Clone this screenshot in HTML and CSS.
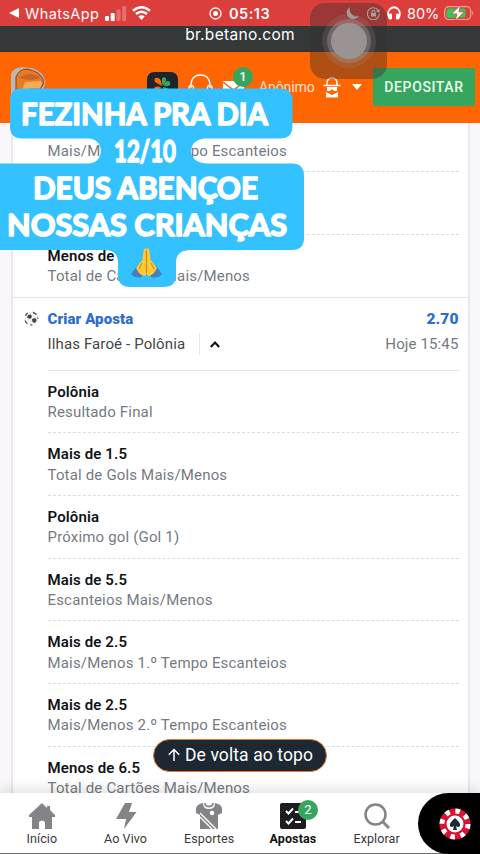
FILE: index.html
```html
<!DOCTYPE html>
<html lang="pt-BR">
<head>
<meta charset="utf-8">
<title>Apostas</title>
<link rel="stylesheet" href="styles.css">
</head>
<body>
<div class="phone">
  <div class="status">
    <div class="status-left">
      <svg width="10" height="10" viewBox="0 0 10 10"><path d="M0 5L10 0V10Z" fill="#fff"/></svg>
      <span class="carrier">WhatsApp</span>
      <svg class="signal" width="22" height="15" viewBox="0 0 22 15"><g fill="#fff"><rect y="10" width="4" height="5" rx="1"/><rect x="5.7" y="7" width="4" height="8" rx="1"/></g><g fill="#fff" opacity=".25"><rect x="11.5" y="3.5" width="4" height="11.5" rx="1"/><rect x="17.2" width="4" height="15" rx="1"/></g></svg>
      <svg width="19" height="14" viewBox="0 0 19 14" fill="none" stroke="#fff" stroke-width="2.6"><path d="M1 4.7Q9.500-2.200 18 4.700M4 8Q9.500 3.500 15 8"/><path d="M9.500 14L6.300 10.600Q9.500 8 12.700 10.600Z" fill="#fff" stroke="none"/></svg>
    </div>
    <div class="status-time">
      <svg width="13" height="13" viewBox="0 0 13 13"><circle cx="6.500" cy="6.500" r="5.500" fill="none" stroke="#fff" stroke-width="1.300"/><circle cx="6.500" cy="6.500" r="2.500" fill="#fff"/></svg>
      <span>05:13</span>
    </div>
    <div class="status-right">
      <svg width="13" height="13" viewBox="0 0 13 13"><path d="M4 0A7 7 0 0 0 12.800 9A6.500 6.500 0 1 1 4 0Z" fill="#ece4e4"/></svg>
      <svg class="lock" width="13" height="13" viewBox="0 0 13 13" fill="none" stroke="#eee" stroke-width="1.100"><path d="M11.500 3.600A6 6 0 1 0 12.400 7M12.500 2.500L11.700 5L9.500 4"/><path d="M5 6V4.700a1.500 1.500 0 0 1 3 0V6"/><rect x="4" y="6" width="5" height="3.500" fill="#eee" stroke="none"/></svg>
      <svg class="phones" width="14" height="14" viewBox="0 0 14 14"><path d="M2.500 12.500Q-.5 6.500 3 3Q7-.5 11 3Q14.500 6.500 11.500 12.500" fill="none" stroke="#fff" stroke-width="1.700"/><rect x="2" y="7.500" width="3" height="6" rx="1.300" fill="#fff"/><rect x="9" y="7.500" width="3" height="6" rx="1.300" fill="#fff"/></svg>
      <span class="percent">80%</span>
      <svg width="30" height="16" viewBox="0 0 30 16"><rect x=".7" y="1.700" width="26" height="12.800" rx="4" fill="none" stroke="#f2a19d" stroke-width="1.200"/><rect x="2.500" y="3.500" width="19" height="9.200" rx="2" fill="#35c759"/><path d="M28 6Q30.500 8 28 10Z" fill="#f2a19d"/><path d="M16.500 0L7.500 9H13L11 16L20.500 6.800H15Z" fill="#fff" stroke="#c94240" stroke-width=".8"/></svg>
    </div>
  </div>
  <div class="url">br.betano.com</div>
  <header class="top">
    <svg class="logo" width="38" height="48" viewBox="0 0 38 48"><path d="M1 45V9Q2 2 12 1L22 2Q32 5 35 14Q36 18 33 23L31 26V45Z" fill="#bcb7b3"/><path d="M6 45V11Q9 3 17 3Q29 5 33 13Q35 18 31 22L28 27V45Z" fill="#ee7a20" stroke="#6b4937"/><path d="M9 12Q20 4 31 12L22 14L13 13Z" fill="#c9642a"/><path d="M12 25L15 16L31 15Q33 18 30 22H20L17 26Z" fill="#f5ac52"/></svg>
    <svg class="clover" width="31" height="32" viewBox="0 0 31 32"><rect width="31" height="32" rx="7" fill="#1d242b"/><path d="M15 14L8 10Q6 5 11 6Q14 6 15 14ZM14 15Q6 13 7 18Q9 22 14 15Z" fill="#ff6500"/><path d="M16 14Q13 6 17 5Q22 7 16 14ZM17 14Q19 7 23 10Q25 15 17 14ZM16 15Q24 16 21 20Q17 21 16 15ZM14 15Q15 20 19 24L16 24Q13 21 14 15Z" fill="#36a55d"/></svg>
    <svg class="support" width="25" height="27" viewBox="0 0 25 27" fill="none" stroke="#fff" stroke-width="1.300"><path d="M3 14V10Q4 1 12.500 1Q21 1 22 10V14"/><rect x="1" y="11.500" width="4.500" height="9" rx="2"/><rect x="19.500" y="11.500" width="4.500" height="9" rx="2"/></svg>
    <div class="mail">
      <svg width="21" height="17" viewBox="0 0 21 17"><rect width="21" height="17" fill="#fff"/><path d="M0 1L10.500 9L21 1" fill="none" stroke="#ff6500" stroke-width="1.500"/></svg>
      <span class="badge mail-badge">1</span>
    </div>
    <span class="user">Anônimo</span>
    <svg class="spy" width="18" height="21" viewBox="0 0 18 21"><path d="M4 8V5Q5 1 9 1Q13 1 14 5V8M.500 8.500H17.500" fill="none" stroke="#fff" stroke-width="1.400"/><path d="M4 10H14V14H11L9 12L7 14H4ZM3 15L9 18L15 15V20.500H3Z" fill="#fff"/></svg>
    <svg class="caret" width="10" height="6" viewBox="0 0 10 6"><path d="M0 0H10L5 6Z" fill="#fff"/></svg>
    <div class="deposit">DEPOSITAR</div>
  </header>
  <main class="content">
    <section class="card">
      <div class="legs previous">
        <div class="leg"><b></b><span>Mais/Menos 1.º Tempo Escanteios</span></div>
        <div class="leg"></div>
        <div class="leg"><b>Menos de</b><span>Total de Cartões Mais/Menos</span></div>
      </div>
      <div class="bet">
        <svg class="ball" width="15" height="15" viewBox="0 0 15 15"><circle cx="7.500" cy="7.500" r="7" fill="#f0f0f0"/><g fill="#444"><path d="M4 4L7 3.500L8 6L6 8L3 6.500ZM8 8L11 7L12.800 9L11 12L8.500 11Z"/><path d="M1 4L3 1.500L4 2L2 5ZM9 .5L13 3L12 4L9 2ZM.5 9L2 10L4 13.500L1.500 12ZM7 13L9 14.500L6 14.500ZM13.500 5L14.500 8L13.500 8Z"/></g></svg>
        <div class="bet-line"><b>Criar Aposta</b><b class="odd">2.70</b></div>
        <div class="match"><span class="teams">Ilhas Faroé - Polônia</span><i class="divider"></i><svg width="10" height="7" viewBox="0 0 10 7"><path d="M.800 6L5 1.500L9.200 6" fill="none" stroke="#111" stroke-width="2"/></svg><span class="when">Hoje 15:45</span></div>
      </div>
      <div class="legs">
        <div class="leg"><b>Polônia</b><span>Resultado Final</span></div>
        <div class="leg"><b>Mais de 1.5</b><span>Total de Gols Mais/Menos</span></div>
        <div class="leg"><b>Polônia</b><span>Próximo gol (Gol 1)</span></div>
        <div class="leg"><b>Mais de 5.5</b><span>Escanteios Mais/Menos</span></div>
        <div class="leg"><b>Mais de 2.5</b><span>Mais/Menos 1.º Tempo Escanteios</span></div>
        <div class="leg"><b>Mais de 2.5</b><span>Mais/Menos 2.º Tempo Escanteios</span></div>
        <div class="leg"><b>Menos de 6.5</b><span>Total de Cartões Mais/Menos</span></div>
      </div>
    </section>
  </main>
  <nav class="tabs">
    <div class="tab"><svg width="26" height="26" viewBox="0 0 26 26"><path d="M13 0L0 12V14H3V26H10V19Q13 16 16 19V26H23V14H26V12L21 7V3H18V5Z" fill="#858388"/></svg><span>Início</span></div>
    <div class="tab"><svg width="22" height="26" viewBox="0 0 22 26"><path d="M10 0H17L14 9H21.500L9 26L11 16H1Z" fill="#858388"/></svg><span>Ao Vivo</span></div>
    <div class="tab"><svg width="26" height="26" viewBox="0 0 26 26"><path d="M7 0Q7 6 13 6Q19 6 19 0Q25 1 26 5V10L22 12V26H4V12L0 10V5Q1 1 7 0Z" fill="#858388"/><path d="M9 0Q9 3.500 13 3.500Q17 3.500 17 0" fill="none" stroke="#858388" stroke-width="1.800"/><path d="M4 10L20 26M4 14L16 26" stroke="#fff" stroke-width="1.400"/><circle cx="16" cy="10" r="2.300" fill="#fff"/></svg><span>Esportes</span></div>
    <div class="tab active"><div class="bets-icon"><svg width="26" height="26" viewBox="0 0 26 26"><rect width="26" height="26" rx="2" fill="#1c1d21"/><path d="M6 8L8.500 10.500L13 5.500M6 18L8.500 20.500L13 15.500M15 9H21M15 19H21" fill="none" stroke="#fff" stroke-width="2"/></svg><span class="badge bets-badge">2</span></div><span>Apostas</span></div>
    <div class="tab"><svg width="26" height="26" viewBox="0 0 26 26" fill="none" stroke="#858388"><circle cx="11.500" cy="11.500" r="10" stroke-width="2.500"/><path d="M18 18L25 25" stroke-width="3"/></svg><span>Explorar</span></div>
    <div class="casino"><svg width="32" height="32" viewBox="0 0 32 32"><circle cx="16" cy="16" r="15.500" fill="#dc1233"/><circle cx="16" cy="16" r="13" fill="none" stroke="#fff" stroke-width="5" stroke-dasharray="4.500 5.710"/><circle cx="16" cy="16" r="10.300" fill="#dc1233"/><circle cx="16" cy="16" r="8.500" fill="#fff"/><path d="M16 10Q22 15 21 18Q19 20 17 18L18 22H14L15 18Q13 20 11 18Q10 15 16 10Z" fill="#202a31"/></svg></div>
  </nav>
  <div class="back"><svg width="14" height="14" viewBox="0 0 14 14"><path d="M7 13V1.500M1.800 6.700L7 1.500L12.200 6.700" fill="none" stroke="#fff" stroke-width="1.500"/></svg><span>De volta ao topo</span></div>
  <svg class="sticker" width="310" height="210" viewBox="0 80 310 210">
    <path d="M22 88.500H280Q292.500 88.500 292.500 101V126Q292.500 138.500 280 138.500H206Q192 139 191 151Q192 162.500 206 163.500H292Q304 163.500 304 176V238Q304 250 292 250H190Q176 250 176 263V275Q176 287 164 287H130Q118 287 118 275V263Q118 250 105 250H0V163.500H88Q100 163 101 151Q100 139 88 138.500H22Q10 138.500 10 126V101Q10 88.500 22 88.500Z" fill="#34c1ff"/>
    <g class="sticker-text"><text x="21" y="124.500" textLength="247" lengthAdjust="spacingAndGlyphs">FEZINHA PRA DIA</text><text x="114" y="161.500" textLength="62" lengthAdjust="spacingAndGlyphs">12/10</text><text x="33" y="198.800" textLength="225" lengthAdjust="spacingAndGlyphs">DEUS ABENÇOE</text><text x="7" y="235.800" textLength="280" lengthAdjust="spacingAndGlyphs">NOSSAS CRIANÇAS</text></g>
    <g><path d="M131 274L137 266L145 273L141 277.500Q134 278 131 274ZM162 274L156 266L148 273L152 277.500Q159 278 162 274Z" fill="#477fbd"/><path d="M146.500 249Q144 247 143.500 251L142.500 260L136 268Q140 276 145 276L146.500 273L148 276Q153 276 157 268L150.500 260L149.500 251Q149 247 146.500 249Z" fill="#ffc934"/><path d="M146.500 250V273M142 263L139 269M151 263L154 269" fill="none" stroke="#c58b16"/></g>
  </svg>
  <div class="touch"><i></i></div>
</div>
</body>
</html>
```
FILE: styles.css
```css
* { box-sizing: border-box; }
body { margin: 0; font-family: Roboto, "Liberation Sans", sans-serif; }
svg { display: block; flex: none; }
.phone { position: relative; width: 480px; height: 854px; overflow: hidden; display: flex; flex-direction: column; background: #fff; }
.status { height: 26px; flex: none; background: #dc3e3b; color: #fff; display: grid; grid-template-columns: 209px 100px 1fr; align-items: center; font-family: Inter, sans-serif; }
.status-left { display: flex; align-items: center; padding-left: 9px; }
.carrier { width: 75px; margin-left: 6px; font-size: 14.5px; letter-spacing: .4px; }
.signal { margin: 0 5px 0 5px; }
.status-time { display: flex; align-items: center; gap: 7px; font-size: 14.5px; font-weight: 600; letter-spacing: .5px; }
.status-right { display: flex; align-items: center; padding-left: 37px; }
.lock { margin-left: 8px; }
.phones { margin-left: 7px; }
.percent { width: 33px; margin: 0 4px 0 6px; font-size: 14.5px; }
.url { height: 26px; flex: none; background: #343839; border-bottom: 1px solid #4c2b18; color: #fff; font: 15.5px/17px Inter, sans-serif; letter-spacing: .3px; text-align: center; }
.top { height: 71px; flex: none; display: flex; align-items: flex-start; padding: 16px 5px 0 10px; background: #ff6500; }
.logo { margin-top: -2px; }
.clover { margin: 4px 0 0 99px; }
.support { margin: 6px 0 0 10px; }
.mail { position: relative; margin: 13px 0 0 10px; }
.badge { position: absolute; border-radius: 50%; background: #36a55d; color: #fff; text-align: center; }
.mail-badge { left: 10px; top: -14px; width: 20px; height: 20px; font: 500 13px/20px Roboto, sans-serif; }
.user { width: 56px; margin: 11px 0 0 15px; color: #ffe1d0; font-size: 14px; line-height: 17px; letter-spacing: -.1px; }
.spy { margin: 9px 0 0 8px; }
.caret { margin: 16px 0 0 11px; }
.deposit { width: 102px; height: 38px; margin-left: auto; background: #36a55d; color: #e8fff0; font-size: 14px; font-weight: 500; line-height: 38px; letter-spacing: .6px; text-align: center; }
.content { flex: 1; min-height: 0; overflow: hidden; padding: 0 10px 0 10.5px; background: #f9f7fb; }
.card { height: 690px; margin-top: -13.5px; border: solid #e9e8ed; border-width: 0 2px; background: #fff; }
.legs { margin: 0 9.5px 0 35px; }
.leg { height: 62.7px; padding-top: 11px; border-bottom: 1px dashed #dadce2; }
.leg:last-child { border-bottom: 0; }
.previous { height: 187px; }
.leg b, .leg span { display: block; height: 20.5px; font-size: 15px; line-height: 21px; white-space: nowrap; }
.leg b { color: #111317; font-weight: 600; letter-spacing: .13px; }
.leg span { color: #757a82; letter-spacing: .17px; }
.previous .leg:first-child span { clip-path: inset(0); }
.bet { position: relative; height: 74px; margin-right: 9.5px; margin-left: 35px; padding-top: 11px; border-bottom: 1px solid #e5e5e8; }
.bet::before { content: ""; position: absolute; left: -35px; right: -9.5px; top: 0; height: 1px; background: #e2e2e8; }
.ball { position: absolute; left: -23.5px; top: 14px; }
.bet-line { display: flex; justify-content: space-between; height: 22px; line-height: 22px; color: #2e6ccd; font-size: 15px; font-weight: 600; letter-spacing: .1px; }
.odd { font-size: 15.5px; }
.match { display: flex; align-items: center; height: 29px; font-size: 15px; color: #42464c; }
.teams { width: 151px; letter-spacing: .13px; white-space: nowrap; }
.divider { width: 1px; height: 22px; margin-right: 10px; background: #e8e8ec; }
.when { margin-left: auto; color: #757a82; letter-spacing: .13px; }
.tabs { position: relative; height: 61px; flex: none; display: grid; grid-template-columns: repeat(5, 83.7px) 61.5px; background: #fff; border-bottom: 1px solid #6e6e6e; box-shadow: 0 -3px 13px #0002; }
.tab { display: flex; flex-direction: column; align-items: center; padding-top: 10px; color: #38383b; font-size: 12.5px; }
.tab > span { margin-top: 2px; line-height: 15px; letter-spacing: .1px; }
.active { color: #111; font-weight: 700; }
.bets-icon { position: relative; }
.bets-badge { left: 18px; top: -3px; width: 20px; height: 20px; font: 13px/20px Roboto, sans-serif; }
.casino { height: 61px; padding: 15px 0 0 21px; background: #000; border-radius: 31px 0 0 31px; }
.back { position: absolute; left: 153px; top: 739px; width: 174px; height: 33px; display: flex; align-items: center; padding: 0 0 2px 13px; gap: 4px; border: 1.5px solid #e17931; border-radius: 17px; background: #1d2832; color: #fff; font-size: 17.5px; letter-spacing: .1px; white-space: nowrap; }
.sticker { position: absolute; left: 0; top: 80px; }
.sticker-text { fill: #fff; stroke: #fff; stroke-width: 1.6px; stroke-linejoin: round; font: 700 31px Lato, sans-serif; }
.touch { position: absolute; left: 310px; top: 3px; width: 77px; height: 76px; border-radius: 15px; display: grid; place-items: center; background: #38303066; }
.touch i { width: 36px; height: 36px; border-radius: 50%; background: #999493; box-shadow: 0 0 0 4px #a0908f70, 0 0 0 9px #a0908f30; }
```
